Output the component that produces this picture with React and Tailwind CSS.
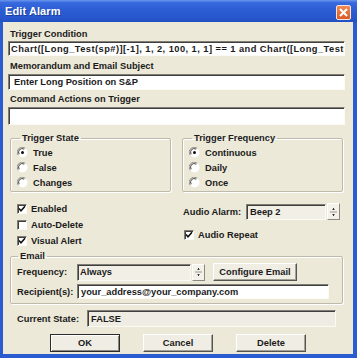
import React from 'react';

const sunken =
  'border border-t-[#7f7d74] border-l-[#7f7d74] border-r-[#fbfaf5] border-b-[#fbfaf5] shadow-[inset_1px_1px_0_#3f3f3f]';

const Radio = ({ checked, label }) => (
  <div className="flex items-center h-[15px]">
    <svg width="11" height="11" viewBox="0 0 11 11" className="shrink-0">
      <circle cx="5.5" cy="5.5" r="5" fill="#ffffff" />
      <path d="M1.2 8.2 A5 5 0 0 1 8.2 1.2" stroke="#8a887f" strokeWidth="1" fill="none" />
      <path d="M2.2 7.2 A3.6 3.6 0 0 1 7.2 2.2" stroke="#444" strokeWidth="1" fill="none" />
      {checked && <circle cx="5.5" cy="5.5" r="1.5" fill="#111" />}
    </svg>
    <span className="ml-[5px]">{label}</span>
  </div>
);

const Check = ({ checked, label }) => (
  <div className="flex items-center">
    <span className={`w-[10px] h-[10px] bg-white flex items-center justify-center shrink-0 ${sunken}`}>
      {checked && (
        <svg width="8" height="8" viewBox="0 0 8 8">
          <path d="M1 3.5 L3 5.8 L7 1.2" stroke="#111" strokeWidth="1.6" fill="none" />
        </svg>
      )}
    </span>
    <span className="ml-[4px]">{label}</span>
  </div>
);

const Spinner = ({ className }) => (
  <div
    className={`w-[13px] flex flex-col items-center justify-center bg-[#f3f1e8] border border-t-white border-l-white border-r-[#8c8a80] border-b-[#8c8a80] ${className}`}
  >
    <svg width="9" height="14" viewBox="0 0 9 14">
      <path d="M4.5 3 L4.5 5 M3.5 4.5 L5.5 4.5" stroke="#333" strokeWidth="1" />
      <path d="M1 7 L8 7" stroke="#9a988e" strokeWidth="1" />
      <path d="M3.5 9.5 L5.5 9.5 M4.5 9.5 L4.5 11" stroke="#333" strokeWidth="1" />
    </svg>
  </div>
);

const Button = ({ children, def, className }) => (
  <button
    className={`h-[18px] flex items-center justify-center bg-[#efede4] ${
      def
        ? 'border border-[#2b2b2b] shadow-[inset_1px_1px_0_#ffffff,inset_-1px_-1px_0_#8c8a80]'
        : 'border border-t-white border-l-white border-r-[#55544e] border-b-[#55544e] shadow-[inset_-1px_-1px_0_#a4a296]'
    } ${className}`}
  >
    {children}
  </button>
);

const App = () => {
  return (
    <div className="w-[357px] h-[358px] flex flex-col font-['Liberation_Sans',Arial,sans-serif] text-[9.3px] font-bold text-[#1b1b1b] leading-[12px] overflow-hidden">
      {/* title bar */}
      <div className="h-[22px] shrink-0 flex items-center bg-[linear-gradient(to_bottom,#6a96ee_0%,#3769dd_12%,#2c5dd3_45%,#2857cd_80%,#2150c2_100%)]">
        <span className="ml-[5px] text-white text-[11px] font-semibold tracking-[0.1px] [text-shadow:1px_1px_0_#1b3f9a]">
          Edit Alarm
        </span>
        <div className="ml-auto mr-[6px] mt-[3px] w-[15px] h-[15px] rounded-[2px] border border-[#f4e6dc] bg-[linear-gradient(to_bottom,#ef8a55,#dc5a24)] flex items-center justify-center">
          <svg width="9" height="9" viewBox="0 0 9 9">
            <path d="M1 1 L8 8 M8 1 L1 8" stroke="#ffffff" strokeWidth="2" />
          </svg>
        </div>
      </div>

      {/* body */}
      <div className="flex-1 bg-[#ece9d8] border-l-[3px] border-r-[4px] border-b-[4px] border-[#2a5bd0] pl-[5px] flex flex-col">
        <div className="mt-[6px] ml-[2px]">Trigger Condition</div>
        <div className={`mt-[1px] w-[337px] h-[15px] bg-white overflow-hidden whitespace-nowrap pl-[2px] flex items-center tracking-[0.45px] ${sunken}`}>
          Chart([Long_Test(sp#)][-1], 1, 2, 100, 1, 1] == 1 and Chart([Long_Test(sp#)][-1]
        </div>

        <div className="mt-[4px] ml-[2px]">Memorandum and Email Subject</div>
        <div className={`mt-[2px] w-[337px] h-[16px] bg-white pl-[5px] flex items-center ${sunken}`}>
          Enter Long Position on S&amp;P
        </div>

        <div className="mt-[3px] ml-[2px]">Command Actions on Trigger</div>
        <div className={`mt-[2px] w-[337px] h-[18px] bg-white ${sunken}`} />

        {/* trigger groups */}
        <div className="mt-[7px] ml-[2px] flex gap-[11px]">
          <fieldset className="w-[161px] h-[60px] border border-[#bdbaab] shadow-[inset_1px_1px_0_#ffffff,1px_1px_0_#ffffff] rounded-[2px] pl-[6px] pt-[1px]">
            <legend className="ml-[3px] px-[2px]">Trigger State</legend>
            <Radio checked label="True" />
            <Radio label="False" />
            <Radio label="Changes" />
          </fieldset>
          <fieldset className="w-[161px] h-[60px] border border-[#bdbaab] shadow-[inset_1px_1px_0_#ffffff,1px_1px_0_#ffffff] rounded-[2px] pl-[6px] pt-[1px]">
            <legend className="ml-[3px] px-[2px]">Trigger Frequency</legend>
            <Radio checked label="Continuous" />
            <Radio label="Daily" />
            <Radio label="Once" />
          </fieldset>
        </div>

        {/* options */}
        <div className="mt-[11px] flex">
          <div className="ml-[9px] w-[166px] flex flex-col gap-[4px]">
            <Check checked label="Enabled" />
            <Check label="Auto-Delete" />
            <Check checked label="Visual Alert" />
          </div>
          <div className="flex flex-col">
            <div className="flex items-center h-[17px]">
              <span className="w-[63px]">Audio Alarm:</span>
              <div className={`w-[80px] h-[16px] bg-[#f1efe6] pl-[3px] flex items-center ${sunken}`}>Beep 2</div>
              <Spinner className="ml-[1px] h-[17px]" />
            </div>
            <div className="mt-[9px] ml-[1px]">
              <Check checked label="Audio Repeat" />
            </div>
          </div>
        </div>

        {/* email */}
        <fieldset className="mt-[3px] ml-[2px] w-[333px] h-[54px] border border-[#bdbaab] shadow-[inset_1px_1px_0_#ffffff,1px_1px_0_#ffffff] rounded-[2px] pl-[6px]">
          <legend className="ml-[1px] px-[2px]">Email</legend>
          <div className="flex items-center mt-[1px]">
            <span className="w-[60px]">Frequency:</span>
            <div className={`w-[114px] h-[17px] bg-[#f1efe6] pl-[2px] flex items-center ${sunken}`}>Always</div>
            <Spinner className="ml-[1px] h-[17px]" />
            <Button className="ml-[8px] w-[84px] h-[18px]">Configure Email</Button>
          </div>
          <div className="flex items-center mt-[3px]">
            <span className="w-[60px]">Recipient(s):</span>
            <div className={`w-[252px] h-[15px] bg-white pl-[3px] flex items-center ${sunken}`}>
              your_address@your_company.com
            </div>
          </div>
        </fieldset>

        <div className="mt-[6px] ml-[9px] flex items-center">
          <span className="w-[70px]">Current State:</span>
          <div className={`w-[249px] h-[17px] bg-[#efede3] pl-[3px] flex items-center ${sunken}`}>FALSE</div>
        </div>

        <div className="mt-[7px] ml-[42px] flex gap-[23px]">
          <Button def className="w-[70px]">OK</Button>
          <Button className="w-[70px]">Cancel</Button>
          <Button className="w-[70px]">Delete</Button>
        </div>
      </div>
    </div>
  );
};

export default App;
